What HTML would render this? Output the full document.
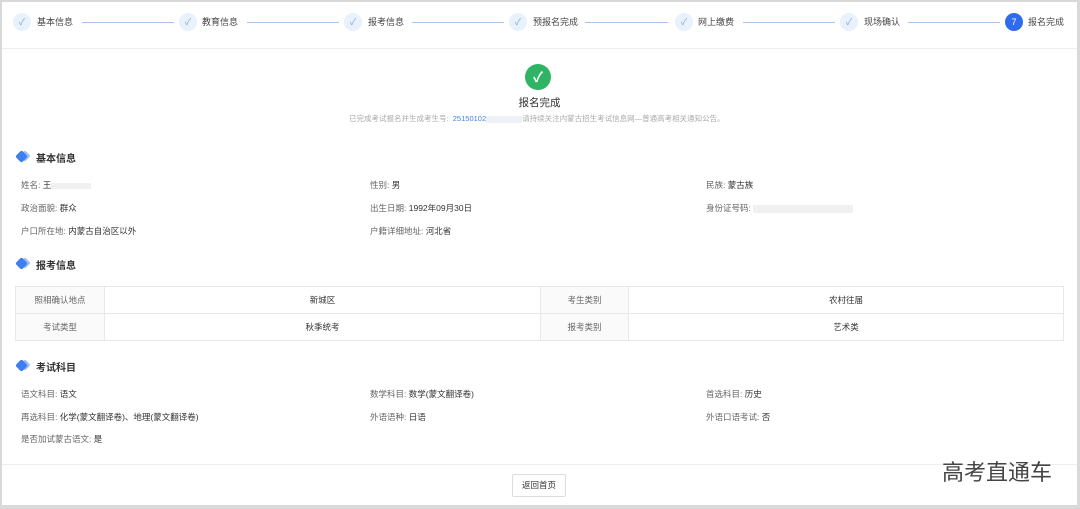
<!DOCTYPE html>
<html><head><meta charset="utf-8"><style>
*{margin:0;padding:0;box-sizing:border-box}
body{width:1080px;height:509px;background:#d9d9d9;font-family:"Liberation Sans","Noto Sans CJK SC",sans-serif;color:#333;position:relative;overflow:hidden}
.page{position:absolute;left:2px;top:2px;width:1075px;height:503px;background:#fff}
.a{position:absolute;white-space:nowrap}
.dot{position:absolute;width:18px;height:18px;border-radius:50%;background:#e8f1fc;color:#7aa6ea;font-size:9px;text-align:center;line-height:18px}
.lbl{position:absolute;font-size:9px;color:#444;top:13px}
.line{position:absolute;top:20px;height:1px;background:#a9c4f0}
.h{position:absolute;font-size:10px;font-weight:bold;color:#333}
.dia{position:absolute;width:9px;height:9px;background:#3f7ef0;transform:rotate(45deg);border-radius:2px}
.dia2{position:absolute;width:8px;height:8px;background:#9dbdf5;transform:rotate(45deg);border-radius:2px}
.t{position:absolute;font-size:8.5px;color:#666}
.t b{font-weight:normal;color:#333}
table{position:absolute;left:13px;top:284px;width:1049px;border-collapse:collapse;font-size:8.5px}
td{border:1px solid #e8e8e8;height:27px;text-align:center;color:#333}
td.k{background:#fafafa;color:#666}
</style></head><body><div class="page">
<div class="dot" style="left:11px;top:11px">✓</div><div class="lbl" style="left:35px">基本信息</div><div class="line" style="left:80px;width:92px"></div>
<div class="dot" style="left:177px;top:11px">✓</div><div class="lbl" style="left:200px">教育信息</div><div class="line" style="left:245px;width:92px"></div>
<div class="dot" style="left:342px;top:11px">✓</div><div class="lbl" style="left:366px">报考信息</div><div class="line" style="left:410px;width:92px"></div>
<div class="dot" style="left:507px;top:11px">✓</div><div class="lbl" style="left:531px">预报名完成</div><div class="line" style="left:583px;width:83px"></div>
<div class="dot" style="left:673px;top:11px">✓</div><div class="lbl" style="left:696px">网上缴费</div><div class="line" style="left:741px;width:92px"></div>
<div class="dot" style="left:838px;top:11px">✓</div><div class="lbl" style="left:862px">现场确认</div><div class="line" style="left:906px;width:92px"></div>
<div class="dot" style="left:1003px;top:11px;background:#2f6bed;color:#fff">7</div><div class="lbl" style="left:1026px">报名完成</div>
<div class="a" style="left:0;top:46px;width:1075px;height:1px;background:#eee"></div>

<div class="a" style="left:523px;top:62px;width:26px;height:26px;border-radius:50%;background:#2fb466;color:#fff;font-size:14px;font-weight:bold;text-align:center;line-height:26px">✓</div>
<div class="a" style="left:0;width:1075px;top:93px;text-align:center;font-size:10.5px;color:#333">报名完成</div>
<div class="a" style="left:347px;top:111px;font-size:7.5px;color:#aaa">已完成考试报名并生成考生号: &nbsp;<span style="color:#4a7fe0">25150102</span><span style="display:inline-block;width:36px;height:7px;background:#eef1f8;vertical-align:middle"></span>请持续关注内蒙古招生考试信息网—普通高考相关通知公告。</div>

<div class="dia2" style="left:19px;top:150px"></div><div class="dia" style="left:15px;top:150px"></div><div class="h" style="left:34px;top:148px">基本信息</div>
<div class="t" style="left:19px;top:177px">姓名: <b>王</b><span style="display:inline-block;width:40px;height:6px;background:#f0f0f0;vertical-align:middle"></span></div>
<div class="t" style="left:368px;top:177px">性别: <b>男</b></div>
<div class="t" style="left:704px;top:177px">民族: <b>蒙古族</b></div>
<div class="t" style="left:19px;top:200px">政治面貌: <b>群众</b></div>
<div class="t" style="left:368px;top:200px">出生日期: <b>1992年09月30日</b></div>
<div class="t" style="left:704px;top:200px">身份证号码: <span style="display:inline-block;width:100px;height:8px;background:#f0f0f0;vertical-align:middle"></span></div>
<div class="t" style="left:19px;top:223px">户口所在地: <b>内蒙古自治区以外</b></div>
<div class="t" style="left:368px;top:223px">户籍详细地址: <b>河北省</b></div>

<div class="dia2" style="left:19px;top:257px"></div><div class="dia" style="left:15px;top:257px"></div><div class="h" style="left:34px;top:255px">报考信息</div>
<table><tr><td class="k" style="width:89px">照相确认地点</td><td style="width:436px">新城区</td><td class="k" style="width:88px">考生类别</td><td>农村往届</td></tr>
<tr><td class="k">考试类型</td><td>秋季统考</td><td class="k">报考类别</td><td>艺术类</td></tr></table>

<div class="dia2" style="left:19px;top:359px"></div><div class="dia" style="left:15px;top:359px"></div><div class="h" style="left:34px;top:357px">考试科目</div>
<div class="t" style="left:19px;top:386px">语文科目: <b>语文</b></div>
<div class="t" style="left:368px;top:386px">数学科目: <b>数学(蒙文翻译卷)</b></div>
<div class="t" style="left:704px;top:386px">首选科目: <b>历史</b></div>
<div class="t" style="left:19px;top:409px">再选科目: <b>化学(蒙文翻译卷)、地理(蒙文翻译卷)</b></div>
<div class="t" style="left:368px;top:409px">外语语种: <b>日语</b></div>
<div class="t" style="left:704px;top:409px">外语口语考试: <b>否</b></div>
<div class="t" style="left:19px;top:431px">是否加试蒙古语文: <b>是</b></div>

<div class="a" style="left:0;top:462px;width:1075px;height:1px;background:#eee"></div>
<div class="a" style="left:510px;top:472px;width:54px;height:23px;border:1px solid #ddd;border-radius:2px;font-size:8.5px;text-align:center;line-height:21px;color:#333">返回首页</div>
<div class="a" style="left:940px;top:453px;font-size:22px;color:#444">高考直通车</div>
</div></body></html>
